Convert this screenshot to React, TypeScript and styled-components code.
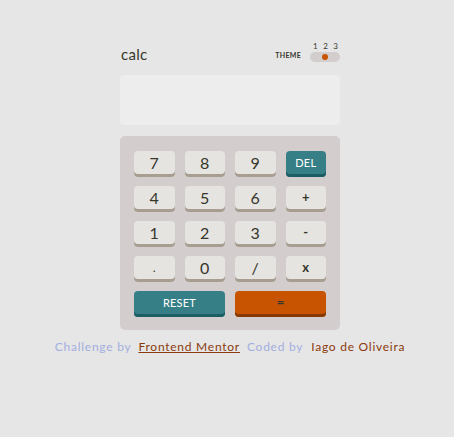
import React from "react";
import styled, { createGlobalStyle } from "styled-components";

const Global = createGlobalStyle`
  html, body { margin: 0; padding: 0; background: #e6e6e6; }
  body { font-family: "Lato", "Noto Sans", sans-serif; color: #36362c; }
`;

const Page = styled.div`
  display: flex;
  flex-direction: column;
  align-items: center;
  padding: 38px 0 0 6px;
  min-height: 437px;
  box-sizing: border-box;
`;

const Calc = styled.div`
  width: 220px;
  display: flex;
  flex-direction: column;
`;

const Header = styled.header`
  display: flex;
  justify-content: space-between;
  align-items: flex-end;
  height: 24px;
  margin-bottom: 13px;
`;

const Title = styled.h1`
  margin: 0 0 0 1px;
  font-size: 15px;
  font-weight: 400;
  line-height: 1;
  color: #36362c;
  letter-spacing: 0.3px;
`;

const Theme = styled.div`
  display: flex;
  align-items: flex-end;
  gap: 9px;
`;

const ThemeLabel = styled.span`
  font-size: 7px;
  font-weight: 700;
  letter-spacing: 0.3px;
  line-height: 1;
  margin-bottom: 3px;
`;

const Switcher = styled.div`
  display: flex;
  flex-direction: column;
  width: 30px;
  gap: 2px;
`;

const Numbers = styled.div`
  display: flex;
  justify-content: space-between;
  padding: 0 2px 0 3px;
  font-size: 8px;
  line-height: 1;
`;

const Track = styled.div`
  position: relative;
  height: 10px;
  border-radius: 5px;
  background: #d3cdcd;
`;

const Dot = styled.span`
  position: absolute;
  top: 2px;
  left: 12px;
  width: 6px;
  height: 6px;
  border-radius: 50%;
  background: #c85402;
`;

const Screen = styled.div`
  height: 50px;
  border-radius: 4px;
  background: #ededed;
  margin-bottom: 11px;
`;

const Keypad = styled.div`
  display: grid;
  grid-template-columns: repeat(4, 1fr);
  column-gap: 10px;
  row-gap: 9px;
  padding: 15px 14px 13px;
  background: #d3cdcd;
  border-radius: 5px;
`;

type Kind = "num" | "fn" | "eq";
type Size = "digit" | "op" | "word" | "dot";

const colors: Record<Kind, { bg: string; sh: string; fg: string }> = {
  num: { bg: "#e5e4e1", sh: "#a79e91", fg: "#36362c" },
  fn: { bg: "#377f86", sh: "#1b5f65", fg: "#ffffff" },
  eq: { bg: "#c85402", sh: "#873901", fg: "#36362c" },
};

const sizes: Record<Size, { fs: string; fw: number }> = {
  digit: { fs: "16px", fw: 400 },
  op: { fs: "13px", fw: 700 },
  word: { fs: "11px", fw: 400 },
  dot: { fs: "12px", fw: 400 },
};

const Key = styled.button<{ $kind: Kind; $span?: number; $size: Size }>`
  grid-column: span ${(p) => p.$span ?? 1};
  height: 26px;
  border: none;
  border-radius: 4px;
  padding: 0 0 3px;
  background: ${(p) => colors[p.$kind].bg};
  color: ${(p) => colors[p.$kind].fg};
  box-shadow: inset 0 -3px 0 ${(p) => colors[p.$kind].sh};
  font-family: "Lato", "Noto Sans", sans-serif;
  font-size: ${(p) => sizes[p.$size].fs};
  font-weight: ${(p) => sizes[p.$size].fw};
  letter-spacing: 0.2px;
  line-height: 1;
  cursor: pointer;
`;

const Footer = styled.footer`
  margin-top: 9px;
  font-size: 12px;
  letter-spacing: 0.75px;
  display: flex;
  gap: 7px;
  white-space: nowrap;
`;

const Muted = styled.span`
  color: #a3aee0;
`;

const Link = styled.a`
  color: #8a3a0c;
  text-decoration: underline;
`;

const Name = styled.span`
  color: #8a3a0c;
  margin-left: 1px;
`;

const keys: { label: string; kind: Kind; span?: number; size: Size }[] = [
  { label: "7", kind: "num", size: "digit" },
  { label: "8", kind: "num", size: "digit" },
  { label: "9", kind: "num", size: "digit" },
  { label: "DEL", kind: "fn", size: "word" },
  { label: "4", kind: "num", size: "digit" },
  { label: "5", kind: "num", size: "digit" },
  { label: "6", kind: "num", size: "digit" },
  { label: "+", kind: "num", size: "op" },
  { label: "1", kind: "num", size: "digit" },
  { label: "2", kind: "num", size: "digit" },
  { label: "3", kind: "num", size: "digit" },
  { label: "-", kind: "num", size: "op" },
  { label: ".", kind: "num", size: "dot" },
  { label: "0", kind: "num", size: "digit" },
  { label: "/", kind: "num", size: "digit" },
  { label: "x", kind: "num", size: "op" },
  { label: "RESET", kind: "fn", span: 2, size: "word" },
  { label: "=", kind: "eq", span: 2, size: "op" },
];

export default function App() {
  return (
    <>
      <Global />
      <Page>
        <Calc>
          <Header>
            <Title>calc</Title>
            <Theme>
              <ThemeLabel>THEME</ThemeLabel>
              <Switcher>
                <Numbers>
                  <span>1</span>
                  <span>2</span>
                  <span>3</span>
                </Numbers>
                <Track>
                  <Dot />
                </Track>
              </Switcher>
            </Theme>
          </Header>
          <Screen />
          <Keypad>
            {keys.map((k) => (
              <Key key={k.label} $kind={k.kind} $span={k.span} $size={k.size}>
                {k.label}
              </Key>
            ))}
          </Keypad>
        </Calc>
        <Footer>
          <Muted>Challenge by</Muted>
          <Link href="#">Frontend Mentor</Link>
          <Muted>Coded by</Muted>
          <Name>Iago de Oliveira</Name>
        </Footer>
      </Page>
    </>
  );
}
